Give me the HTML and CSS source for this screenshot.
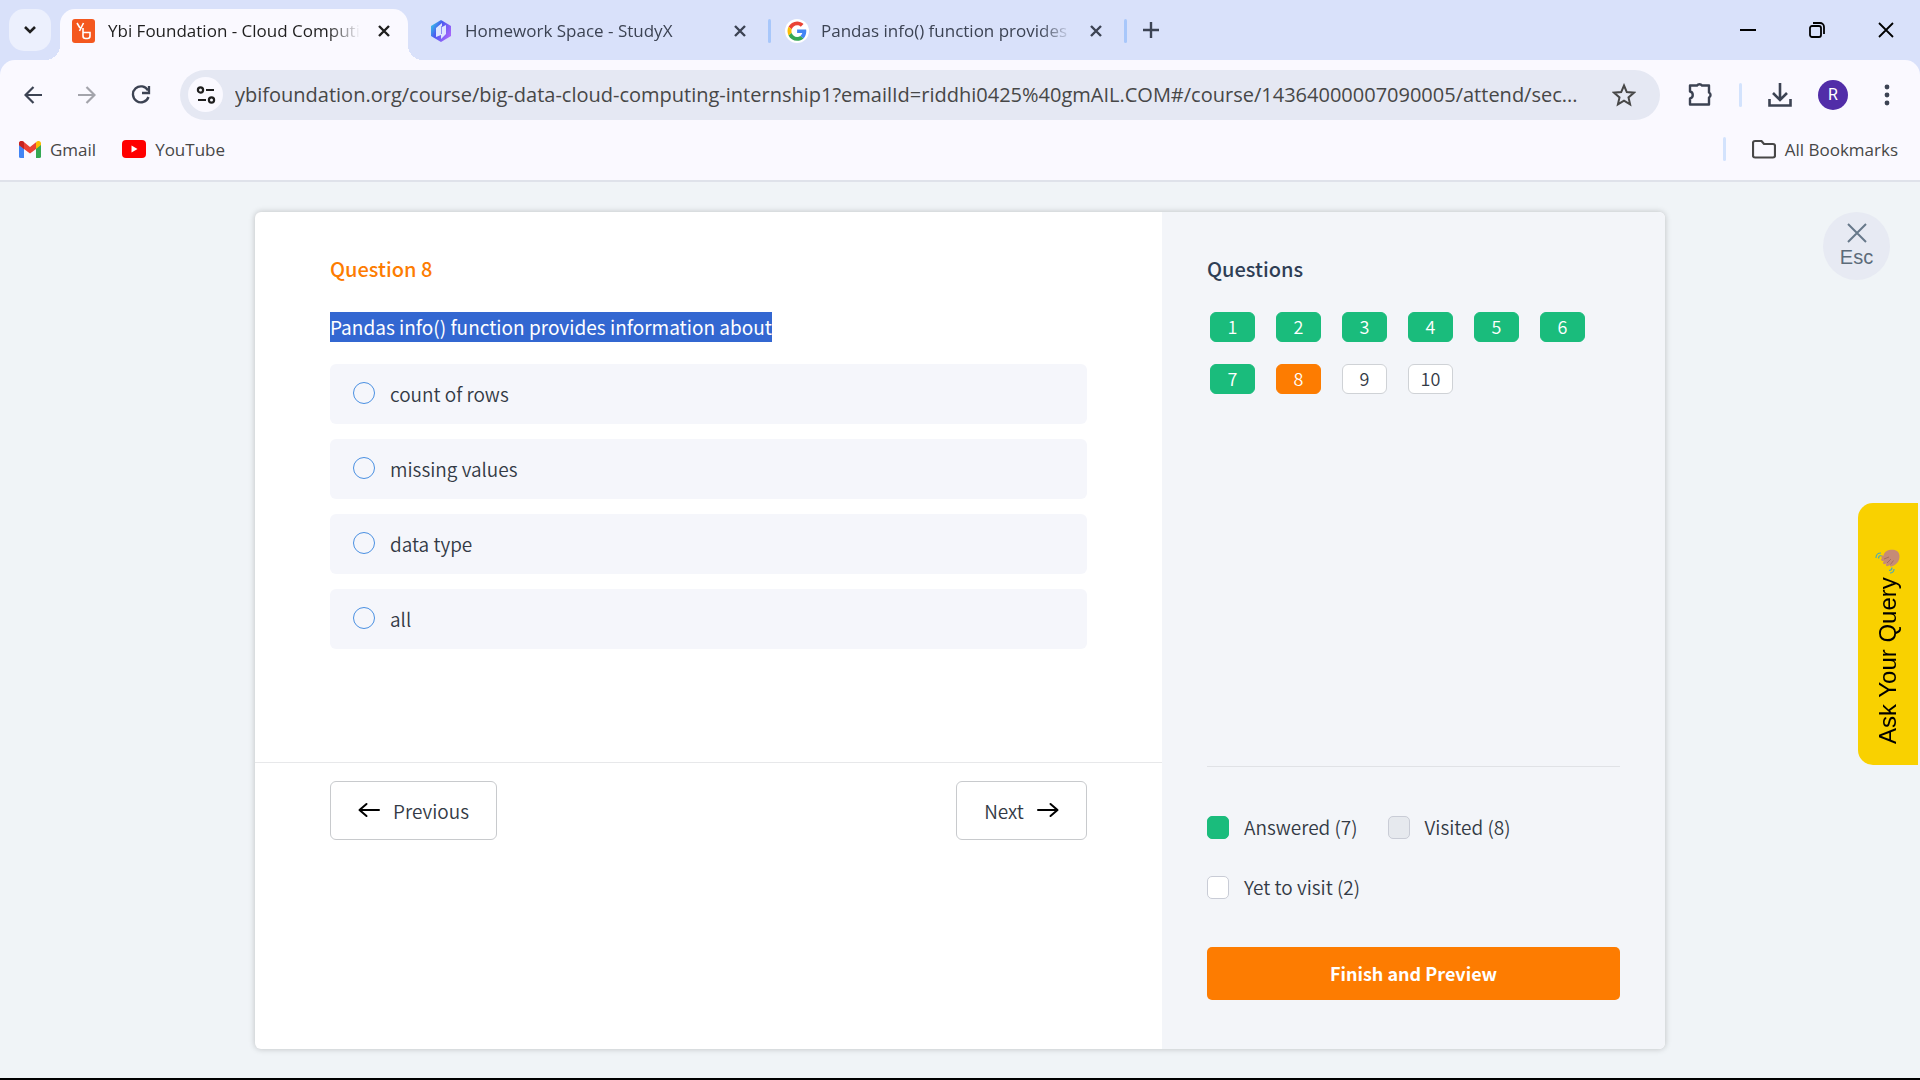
FILE: index.html
```html
<!DOCTYPE html>
<html lang="en">
<head>
<meta charset="utf-8">
<title>Ybi Foundation - Cloud Computing</title>
<link rel="stylesheet" href="styles.css">
</head>
<body>
<header class="browser">
  <div class="tabstrip">
    <button class="tab-search" aria-label="Search tabs"><svg width="16" height="16" viewBox="0 0 16 16"><path d="M3 5l5 5 5-5" fill="none" stroke="#1f1f1f" stroke-width="2.6"/></svg></button>
    <div class="tab tab-active">
      <svg class="favicon" width="24" height="24" viewBox="0 0 24 24"><rect width="23" height="24" rx="3" fill="#f4581f"/><path d="M5 4l3 5M11.500 4L7.500 12M11 9v8a2.500 2.500 0 0 0 2.500 2.500h2a2.500 2.500 0 0 0 2.500-2.500v-3.500h-7" fill="none" stroke="#fff" stroke-width="1.600"/></svg>
      <span class="tab-title">Ybi Foundation - Cloud Computing</span>
      <button class="tab-close" aria-label="Close tab"><svg width="14" height="14" viewBox="0 0 14 14"><path d="M2 2l10 10M12 2L2 12" stroke="#1f1f1f" stroke-width="2.400"/></svg></button>
    </div>
    <div class="tab tab-second">
      <svg class="favicon" width="24" height="24" viewBox="0 0 24 24"><defs><linearGradient id="gem" x1="0" y1="0" x2="1" y2="0.600"><stop offset="0" stop-color="#2fe0e6"/><stop offset="0.450" stop-color="#4b5bf0"/><stop offset="1" stop-color="#a565fa"/></linearGradient></defs><path d="M12 1l10 6v10l-10 6-10-6V7z" fill="url(#gem)"/><path d="M7 9l6-5v4l4-2v9l-5 5v-4l-5 2z" fill="#dfe6ff"/><path d="M12.500 7v8" stroke="#8b8cf6" fill="none"/></svg>
      <span class="tab-title">Homework Space - StudyX</span>
      <button class="tab-close" aria-label="Close tab"><svg width="14" height="14" viewBox="0 0 14 14"><path d="M2 2l10 10M12 2L2 12" stroke="#3c4353" stroke-width="2.400"/></svg></button>
    </div>
    <span class="tab-sep"></span>
    <div class="tab tab-third">
      <svg class="favicon" width="24" height="24" viewBox="0 0 24 24"><circle cx="12" cy="12" r="12" fill="#fff"/><g transform="translate(2.500 2.500) scale(.4)"><path fill="#EA4335" d="M24 9.500c3.540 0 6.710 1.220 9.210 3.600l6.850-6.850C35.900 2.380 30.470 0 24 0 14.620 0 6.510 5.380 2.560 13.220l7.980 6.190C12.430 13.720 17.740 9.500 24 9.500z"/><path fill="#4285F4" d="M46.980 24.550c0-1.570-.15-3.090-.38-4.550H24v9.020h12.940c-.58 2.960-2.260 5.480-4.780 7.180l7.730 6c4.510-4.180 7.090-10.360 7.090-17.650z"/><path fill="#FBBC05" d="M10.530 28.590c-.48-1.450-.76-2.990-.76-4.590s.27-3.140.76-4.590l-7.980-6.190C.92 16.460 0 20.120 0 24s.92 7.540 2.560 10.780z"/><path fill="#34A853" d="M24 48c6.480 0 11.930-2.130 15.890-5.810l-7.730-6c-2.150 1.450-4.920 2.300-8.160 2.300-6.260 0-11.570-4.220-13.470-9.910l-7.980 6.190C6.510 42.620 14.620 48 24 48z"/></g></svg>
      <span class="tab-title">Pandas info() function provides information</span>
      <button class="tab-close" aria-label="Close tab"><svg width="14" height="14" viewBox="0 0 14 14"><path d="M2 2l10 10M12 2L2 12" stroke="#3c4353" stroke-width="2.400"/></svg></button>
    </div>
    <span class="tab-sep"></span>
    <button class="new-tab" aria-label="New tab"><svg width="16" height="16" viewBox="0 0 16 16"><path d="M8 0v16M0 8h16" stroke="#3c4353" stroke-width="2.400"/></svg></button>
    <div class="window-controls">
      <button aria-label="Minimize"><svg width="16" height="16" viewBox="0 0 16 16"><path d="M0 8h16" stroke="#000" stroke-width="2"/></svg></button>
      <button aria-label="Restore"><svg width="16" height="16" viewBox="0 0 16 16"><rect x="1" y="4" width="11" height="11" rx="2" fill="none" stroke="#000" stroke-width="1.800"/><path d="M4 1h7a4 4 0 0 1 4 4v7" fill="none" stroke="#000" stroke-width="1.800"/></svg></button>
      <button aria-label="Close"><svg width="16" height="16" viewBox="0 0 16 16"><path d="M1 1l14 14M15 1L1 15" stroke="#000" stroke-width="1.800"/></svg></button>
    </div>
  </div>
  <div class="toolbar">
    <div class="nav">
      <button aria-label="Back"><svg width="18" height="18" viewBox="0 0 18 18"><path d="M18 9H2M9.500 1L1.500 9l8 8" fill="none" stroke="#3c4353" stroke-width="2.200"/></svg></button>
      <button aria-label="Forward"><svg width="18" height="18" viewBox="0 0 18 18"><path d="M0 9h16M8.500 1l8 8-8 8" fill="none" stroke="#a3a4ab" stroke-width="2.200"/></svg></button>
      <button aria-label="Reload"><svg width="20" height="20" viewBox="0 0 20 20"><path d="M17.500 12A8 8 0 1 1 17 5.500" fill="none" stroke="#3c4353" stroke-width="2.300"/><path d="M18 1v7h-7" fill="none" stroke="#3c4353" stroke-width="2.300"/></svg></button>
    </div>
    <div class="omnibox">
      <button class="site-info" aria-label="View site information"><svg width="20" height="20" viewBox="0 0 20 20"><g fill="none" stroke="#1f1f1f" stroke-width="2.200"><circle cx="4.500" cy="5" r="2.600"/><path d="M10 5h8M2 15h8"/><circle cx="15.500" cy="15" r="2.600"/></g></svg></button>
      <input class="url" type="text" aria-label="Address" value="ybifoundation.org/course/big-data-cloud-computing-internship1?emailId=riddhi0425%40gmAIL.COM#/course/14364000007090005/attend/sec...">
      <button class="star" aria-label="Bookmark this tab"><svg width="24" height="24" viewBox="0 0 24 24"><path d="M12 2.500l2.800 6.600 7.100.6-5.400 4.700 1.600 7L12 17.700l-6.100 3.700 1.600-7-5.400-4.700 7.100-.6z" fill="none" stroke="#474747" stroke-width="2"/></svg></button>
    </div>
    <div class="actions">
      <button aria-label="Extensions"><svg width="26" height="26" viewBox="0 0 26 26"><path d="M3 3.500h7a3 2.800 0 0 1 5 0h7v7a2.800 2.800 0 0 1 0 5v7H3v-6a3.600 3.600 0 0 0 0-7z" fill="none" stroke="#3c4353" stroke-width="2.400" stroke-linejoin="round"/></svg></button>
      <span class="bar-sep"></span>
      <button aria-label="Downloads"><svg width="24" height="24" viewBox="0 0 24 24"><path d="M12 0v16M5 10l7 7 7-7M1.500 16v6.500h21V16" fill="none" stroke="#3c4353" stroke-width="2.600"/></svg></button>
      <button class="avatar" aria-label="Profile">R</button>
      <button class="menu" aria-label="Menu"><svg width="6" height="22" viewBox="0 0 6 22"><g fill="#3c4353"><circle cx="3" cy="3" r="2.400"/><circle cx="3" cy="11" r="2.400"/><circle cx="3" cy="19" r="2.400"/></g></svg></button>
    </div>
  </div>
  <nav class="bookmarks">
    <a href="#gmail"><svg width="22" height="17" viewBox="0 0 22 17"><path d="M0 3v12.500A1.500 1.500 0 0 0 1.500 17H5V7z" fill="#4285f4"/><path d="M22 3v12.500a1.500 1.500 0 0 1-1.500 1.500H17V7z" fill="#34a853"/><path d="M17 1.500V8l5-4V2.500C22 .3 19.500-.8 17.700.6z" fill="#fbbc04"/><path d="M0 2.500V4l5 4 6 4.500L17 8V1.300L11 6 4.300.6C2.500-.8 0 .3 0 2.500z" fill="#ea4335"/><path d="M0 2.500V4l5 4V1.200L4.300.6C2.500-.8 0 .3 0 2.500z" fill="#c5221f"/></svg>Gmail</a>
    <a href="#youtube"><svg width="24" height="18" viewBox="0 0 24 18"><rect width="24" height="18" rx="4" fill="#f00"/><path d="M9.500 5.500v7l6-3.500z" fill="#fff"/></svg>YouTube</a>
    <span class="bar-sep"></span>
    <a class="all" href="#bookmarks"><svg width="24" height="20" viewBox="0 0 24 20"><path d="M3 2h6.500l2.500 3h9a2 2 0 0 1 2 2v9.500a2 2 0 0 1-2 2H3a2 2 0 0 1-2-2V4a2 2 0 0 1 2-2z" fill="none" stroke="#474747" stroke-width="2.200"/></svg>All Bookmarks</a>
  </nav>
</header>
<main class="page">
  <div class="card">
    <section class="quiz">
      <form class="question">
        <h1>Question 8</h1>
        <p><mark>Pandas info() function provides information about</mark></p>
        <label class="option"><input type="radio" name="answer">count of rows</label>
        <label class="option"><input type="radio" name="answer">missing values</label>
        <label class="option"><input type="radio" name="answer">data type</label>
        <label class="option"><input type="radio" name="answer">all</label>
      </form>
      <div class="pager">
        <button class="prev"><svg width="22" height="16" viewBox="0 0 22 16"><path d="M21 8H2M8.500 2L1.500 8l7 6" fill="none" stroke="#000" stroke-width="2" stroke-linecap="round" stroke-linejoin="round"/></svg>Previous</button>
        <button class="next">Next<svg width="22" height="16" viewBox="0 0 22 16"><path d="M1 8h19M13.500 2l7 6-7 6" fill="none" stroke="#000" stroke-width="2" stroke-linecap="round" stroke-linejoin="round"/></svg></button>
      </div>
    </section>
    <aside class="side">
      <h2>Questions</h2>
      <div class="numbers">
        <button class="done">1</button><button class="done">2</button><button class="done">3</button><button class="done">4</button><button class="done">5</button><button class="done">6</button><button class="done">7</button><button class="current">8</button><button>9</button><button>10</button>
      </div>
      <ul class="legend">
        <li><i class="swatch answered"></i>Answered (7)</li>
        <li><i class="swatch visited"></i>Visited (8)</li>
        <li><i class="swatch"></i>Yet to visit (2)</li>
      </ul>
      <button class="finish">Finish and Preview</button>
    </aside>
  </div>
  <button class="esc"><svg width="20" height="20" viewBox="0 0 20 20"><path d="M1 1l18 18M19 1L1 19" stroke="#67798a" stroke-width="2"/></svg>Esc</button>
  <button class="query"><span>Ask Your Query</span><svg width="26" height="26" viewBox="0 0 26 26"><path d="M7 10c-2-2 0-3 1.500-2C9 1.500 18 .5 22 3c4 3 3 10-1 13-2 1.500-3 2-4.500 2.500-1.500.5-2-1-1-2-1.500 1.500-4 2.500-4.500 1s1-2.500 1-2.500c-1.500 1.500-4 1.500-4 0s1.500-2.500 1.500-2.500C8 13.500 6 13 6 11.500z" fill="#c68b76"/><path d="M12 15l4-4M15.500 16.500l3-4M9 11l5-2" fill="none" stroke="#a56d5e"/><path d="M1 10c0-3 2-5 5-5M3.500 10.500c0-2 1-3 3-3M19 21c0 2-1.500 4-4 4M17 19.500c0 2-1 3-3 3" fill="none" stroke="#4fa9b8" stroke-width="1.200"/></svg></button>
</main>
</body>
</html>
```

FILE: styles.css
```css
* { box-sizing: border-box; }
body {
  margin: 0;
  min-height: 100vh;
  display: flex;
  flex-direction: column;
  background: #f0f4f7;
  border-bottom: 2px solid #000;
  font-family: "Noto Sans CJK SC", sans-serif;
  font-size: 19px;
  font-weight: 350;
  color: #333a45;
}
button { border: 0; padding: 0; background: none; font: inherit; color: inherit; display: flex; align-items: center; justify-content: center; }
svg { display: block; flex: none; }

/* Browser chrome */
.browser { font-family: "Open Sans", sans-serif; font-weight: 400; background: #d9e1fa; }
.tabstrip { display: flex; align-items: flex-end; height: 60px; padding-left: 9px; color: #3c4353; }
.tab-search { width: 42px; height: 42px; margin: 0 9px 9px 0; border-radius: 15px; background: #ecf0fd; }
.tab { display: flex; align-items: center; flex: 0 1 348px; min-width: 0; height: 51px; padding: 0 14px 8px 12px; font-size: 17px; }
.tab-second { flex-basis: 360px; padding-left: 21px; padding-right: 18px; }
.tab-third { flex-basis: 353px; padding-left: 14px; padding-right: 18px; }
.tab-active { position: relative; border-radius: 15px 15px 0 0; background: #faf9ff; color: #1f1f1f; }
.tab-active::before, .tab-active::after { content: ""; position: absolute; bottom: 0; width: 15px; height: 15px; }
.tab-active::before { left: -15px; background: radial-gradient(circle at 0 0, transparent 15px, #faf9ff 15px); }
.tab-active::after { right: -15px; background: radial-gradient(circle at 100% 0, transparent 15px, #faf9ff 15px); }
.tab-title { flex: 1; min-width: 0; margin: 0 14px 0 12px; overflow: hidden; white-space: nowrap; line-height: 24px; mask-image: linear-gradient(to right, #000 calc(100% - 32px), transparent); }
.tab-close { width: 20px; height: 20px; }
.tab-sep { width: 3px; height: 24px; margin-bottom: 17px; border-radius: 2px; background: #a8c7fa; }
.new-tab { width: 48px; height: 60px; }
.window-controls { display: flex; margin-left: auto; }
.window-controls button { width: 69px; height: 60px; }

.toolbar { display: flex; align-items: center; height: 69px; border-radius: 15px 15px 0 0; background: #faf9ff; }
.nav { display: flex; padding: 0 12px 0 6px; }
.nav button { width: 54px; height: 50px; }
.omnibox { flex: 1; min-width: 0; display: flex; align-items: center; height: 50px; padding: 0 24px 0 8px; border-radius: 25px; background: #e5e8f3; }
.site-info { flex: none; width: 35px; height: 35px; border-radius: 50%; background: #faf9ff; }
.url { flex: 1; min-width: 0; height: 40px; margin: 0 12px; padding: 0; border: 0; background: none; font: 20px "Open Sans", sans-serif; color: #474747; }
.actions { display: flex; align-items: center; gap: 26px; padding: 0 20px 0 27px; }
.bar-sep { width: 3px; height: 24px; border-radius: 2px; background: #d3e3fd; }
.avatar { width: 30px; height: 30px; border-radius: 50%; background: #512da8; color: #fff; font: 16px Roboto, sans-serif; }
.menu { width: 26px; }

.bookmarks { display: flex; align-items: center; height: 53px; padding: 0 22px 11px 19px; gap: 26px; border-bottom: 2px solid #dfe2ea; background: #faf9ff; font-size: 17px; }
.bookmarks a { display: flex; align-items: center; gap: 9px; color: #474747; text-decoration: none; }
.bookmarks .bar-sep { margin-left: auto; }

/* Quiz */
.page { position: relative; flex: 1; display: flex; padding: 30px 255px 29px; }
.card { flex: 1; display: grid; grid-template-columns: 907fr 503fr; border-radius: 6px; background: #fff; box-shadow: 0 0 6px rgba(0, 0, 0, .22); overflow: hidden; }
h1, h2 { margin: 0; font-size: 20px; line-height: 30px; font-weight: 500; }
h1 { color: #fd7c01; }
h2 { color: #2f3e55; }
.question { min-height: 551px; padding: 42px 75px 0; border-bottom: 1px solid #e7e8ea; }
.question p { margin: 28px 0 22px; line-height: 30px; font-weight: 400; }
mark { display: inline-block; background: #3367d1; color: #fff; }
.option { display: flex; align-items: center; gap: 15px; height: 60px; margin-bottom: 15px; padding: 0 0 2px 23px; border-radius: 6px; background: #f5f6fb; }
.option input { appearance: none; width: 22px; height: 22px; margin: 0; border: 1px solid #4a90e2; border-radius: 50%; }
.pager { display: flex; justify-content: space-between; padding: 18px 75px; }
.pager button { height: 59px; padding-bottom: 1px; gap: 13px; border: 1px solid #c8cacd; border-radius: 6px; background: #fff; }
.prev { width: 167px; }
.next { width: 131px; }
.side { display: flex; flex-direction: column; padding: 42px 45px 49px; background: #f3f5f9; }
.numbers { display: flex; flex-wrap: wrap; gap: 22px 21px; margin: 28px 0 0 3px; }
.numbers button { width: 45px; height: 30px; padding-bottom: 2px; border: 1px solid #cfd2d6; border-radius: 6px; background: #fff; font-size: 18px; }
.numbers .done { border-color: #1abc7c; background: #1abc7c; color: #fff; }
.numbers .current { border-color: #fd7c01; background: #fd7c01; color: #fff; }
.legend { display: flex; flex-wrap: wrap; gap: 30px; margin: auto 0 0; padding: 45px 0; border-top: 1px solid #e0e2e6; list-style: none; line-height: 30px; }
.legend li { display: flex; align-items: center; gap: 15px; }
.swatch { width: 22px; height: 23px; border: 1px solid #c9ccd6; border-radius: 5px; background: #fff; }
.answered { border-color: #1abc7c; background: #1abc7c; }
.visited { background: #e6e9ee; }
.finish { height: 53px; padding-bottom: 2px; border-radius: 5px; background: #fd7c01; color: #fff; font-size: 18px; font-weight: 700; }

.esc { position: absolute; top: 30px; right: 30px; width: 67px; height: 68px; flex-direction: column; gap: 2px; border-radius: 50%; background: #e7eaf3; color: #5c6b79; font: 20px/24px "Liberation Sans", sans-serif; }
.query { position: absolute; top: 321px; right: 2px; width: 60px; height: 262px; padding-bottom: 24px; gap: 4px; border-radius: 0 15px 15px 0; background: #f9d100; color: #000; font: 24px "Liberation Sans", sans-serif; writing-mode: vertical-rl; transform: rotate(180deg); }
.query svg { transform: rotate(180deg); }
```
